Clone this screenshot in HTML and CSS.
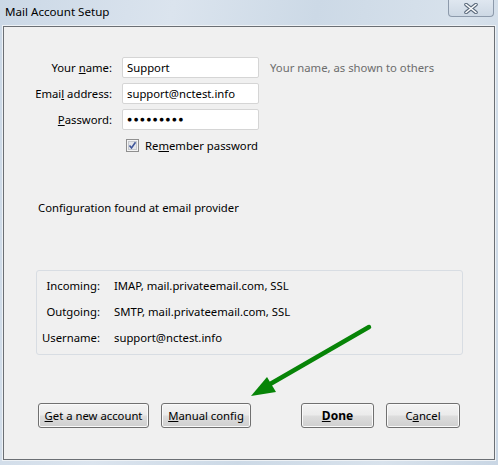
FILE: index.html
```html
<!DOCTYPE html>
<html>
<head>
<meta charset="utf-8">
<link rel="stylesheet" href="styles.css">
</head>
<body>
<div class="window">
  <div class="titlebar">
    <span class="title">Mail Account Setup</span>
    <div class="close">
      <svg width="18" height="11" viewBox="0 0 18 11">
        <path d="M4 1.5 L14 9.5 M14 1.5 L4 9.5" stroke="#5b6a7c" stroke-width="3.6" stroke-linecap="round"/>
        <path d="M4 1.5 L14 9.5 M14 1.5 L4 9.5" stroke="#ffffff" stroke-width="1.6" stroke-linecap="round"/>
      </svg>
    </div>
  </div>
  <div class="panel">
    <div class="form">
      <label class="lbl">Your <u>n</u>ame:</label>
      <div class="field">Support</div>
      <span class="hint">Your name, as shown to others</span>
      <label class="lbl">Emai<u>l</u> address:</label>
      <div class="field">support@nctest.info</div>
      <span></span>
      <label class="lbl"><u>P</u>assword:</label>
      <div class="field dots">●●●●●●●●●</div>
      <span></span>
    </div>
    <div class="remember">
      <span class="check">
        <svg width="13" height="13" viewBox="0 0 13 13">
          <rect x="0.5" y="0.5" width="12" height="12" fill="#f4f4f4" stroke="#8f8f8f"/>
          <rect x="2.5" y="2.5" width="8" height="8" fill="#e4e6ea" stroke="#c6c9cf"/>
          <path d="M3.5 6.5 L5.5 9 L9.5 3.2" fill="none" stroke="#3f569a" stroke-width="1.6"/>
        </svg>
      </span>
      <span>Re<u>m</u>ember password</span>
    </div>
    <div class="found">Configuration found at email provider</div>
    <div class="config">
      <div class="crow"><span class="clbl">Incoming:</span><span>IMAP, mail.privateemail.com, SSL</span></div>
      <div class="crow"><span class="clbl">Outgoing:</span><span>SMTP, mail.privateemail.com, SSL</span></div>
      <div class="crow"><span class="clbl">Username:</span><span>support@nctest.info</span></div>
    </div>
    <div class="buttons">
      <div class="btn b-get"><u>G</u>et a new account</div>
      <div class="btn b-manual"><u>M</u>anual config</div>
      <div class="btn b-done"><u>D</u>one</div>
      <div class="btn b-cancel">C<u>a</u>ncel</div>
    </div>
  </div>
  <svg class="arrow" width="498" height="465" viewBox="0 0 498 465">
    <path d="M369 327 L265 387" stroke="#078407" stroke-width="4.5" stroke-linecap="round"/>
    <path d="M251 396 L267 377 L276 392 Z" fill="#078407"/>
  </svg>
</div>
</body>
</html>
```
FILE: styles.css
```css
* { box-sizing: border-box; }
html, body { margin: 0; padding: 0; }
body {
  width: 498px;
  height: 465px;
  overflow: hidden;
  font-family: "Noto Sans", "Open Sans", sans-serif;
  font-size: 11.3px;
  color: #000;
}
.window {
  position: relative;
  width: 498px;
  height: 465px;
  background: linear-gradient(100deg, #cbd8e6 0%, #dbe4ee 30%, #ccd9e6 55%, #d8e2ec 80%, #c9d6e4 100%);
  display: flex;
  flex-direction: column;
}
.titlebar {
  height: 26px;
  display: flex;
  align-items: flex-start;
  justify-content: space-between;
}
.title {
  margin: 4px 0 0 5px;
  font-size: 11.6px;
  line-height: 16px;
}
.close {
  width: 46px;
  height: 17px;
  margin-right: 4px;
  border: 1px solid #8d9aab;
  border-top: none;
  border-radius: 0 0 4px 4px;
  background: linear-gradient(#dfe7f0, #cdd8e4);
  display: flex;
  align-items: center;
  justify-content: center;
}
.panel {
  margin: 0 3px 0 3px;
  height: 434px;
  background: #f0f0f0;
  border: 1px solid #6b6f74;
  box-shadow: 0 0 0 1px #eef2f6;
  display: flex;
  flex-direction: column;
}
.form {
  display: grid;
  grid-template-columns: 108px 137px auto;
  grid-auto-rows: 21px;
  column-gap: 10px;
  row-gap: 5px;
  margin-top: 30px;
  align-items: center;
}
.form .hint { margin-left: 1px; color: #6d6d6d; }
.lbl { text-align: right; }
.field {
  height: 21px;
  background: #fff;
  border: 1px solid #d5d5d5;
  border-radius: 2px;
  padding: 0 4px;
  line-height: 19px;
}
.dots { font-size: 8.6px; letter-spacing: 1.2px; line-height: 19px; }
.remember {
  margin: 5px 0 0 122px;
  height: 21px;
  display: flex;
  align-items: center;
  gap: 6px;
}
.check { display: flex; }
.found {
  margin: 44px 0 0 34px;
  line-height: 16px;
}
.config {
  margin: 54px 0 0 32px;
  width: 427px;
  height: 85px;
  border: 1px solid #d8dde3;
  border-radius: 3px;
  padding-top: 1px;
}
.crow {
  height: 26px;
  display: flex;
  align-items: center;
}
.clbl {
  width: 63px;
  text-align: right;
  margin-right: 14px;
}
.buttons {
  margin: 48px 0 0 34px;
  display: flex;
  height: 25px;
}
.btn {
  height: 25px;
  border: 1px solid #707070;
  border-radius: 3px;
  background: linear-gradient(#f3f3f3 0%, #ebebeb 48%, #dddddd 52%, #cfcfcf 100%);
  box-shadow: inset 0 0 0 1px #fafafa;
  display: flex;
  align-items: center;
  justify-content: center;
}
.b-get { width: 111px; }
.b-manual { width: 90px; margin-left: 12px; }
.b-done { width: 73px; margin-left: 50px; font-weight: bold; font-size: 12px; }
.b-cancel { width: 74px; margin-left: 12px; }
.arrow {
  position: absolute;
  left: 0;
  top: 0;
  pointer-events: none;
}
```
